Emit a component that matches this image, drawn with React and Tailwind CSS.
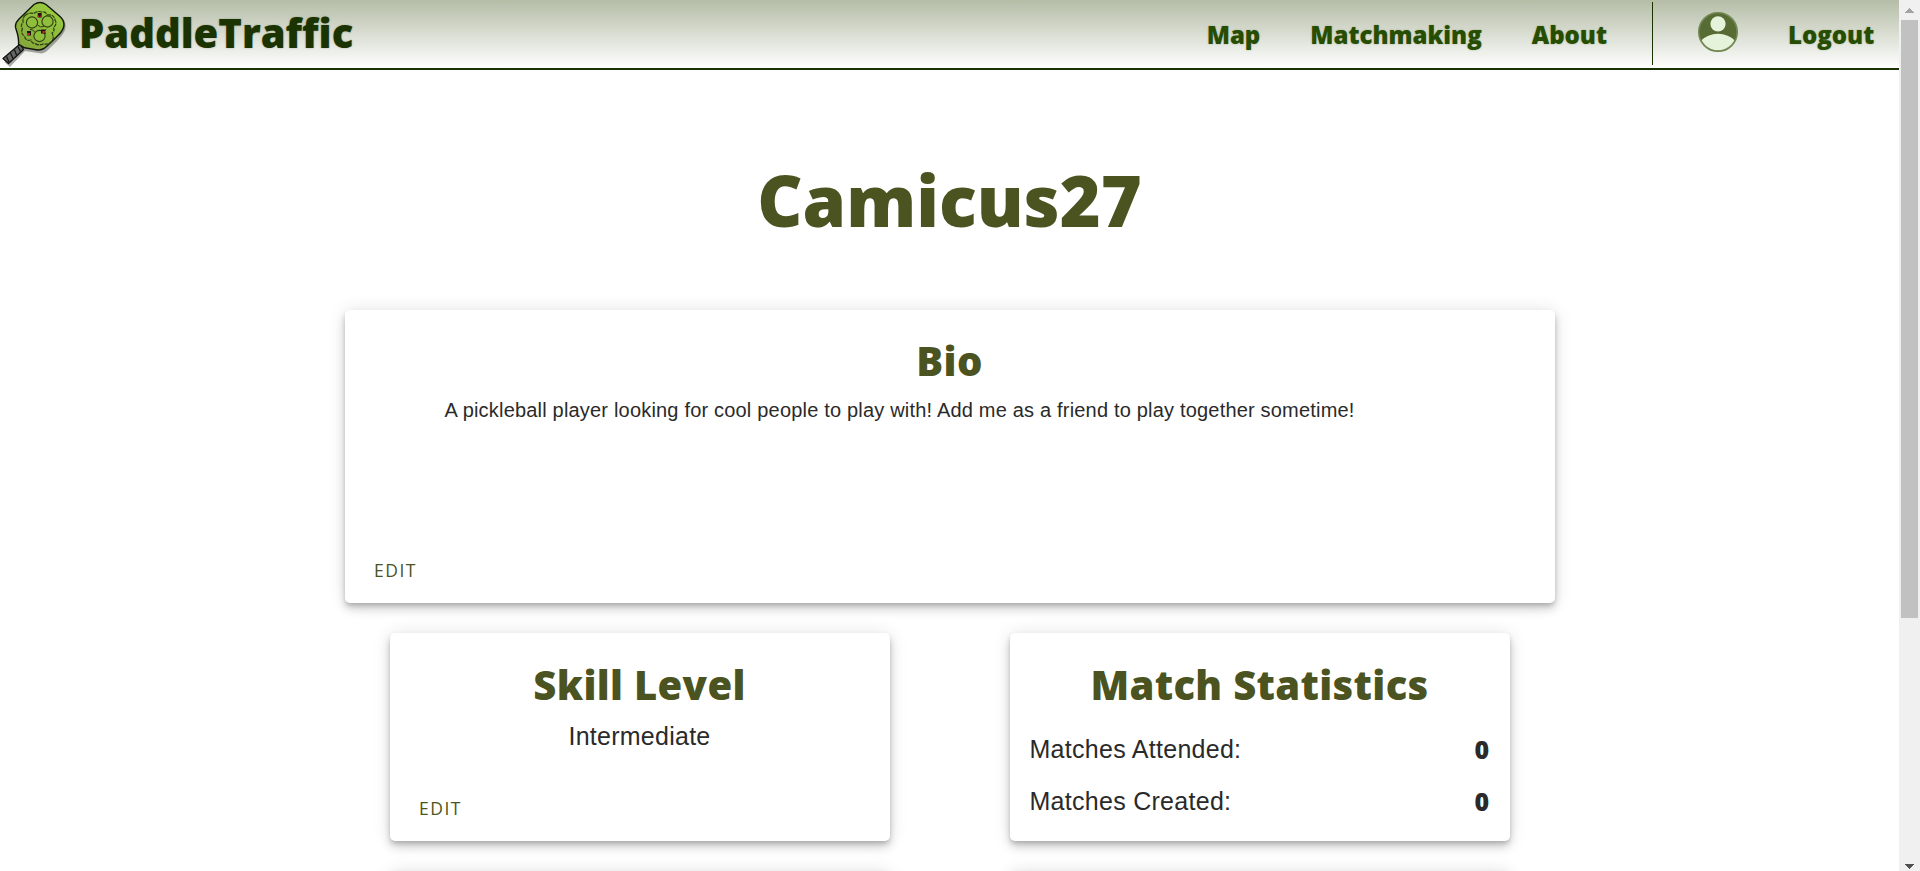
import React from "react";

const cardShadow =
  "shadow-[0px_3px_5px_-1px_rgba(0,0,0,0.2),0px_6px_10px_0px_rgba(0,0,0,0.14),0px_1px_18px_0px_rgba(0,0,0,0.12)]";

function PaddleLogo() {
  return (
    <svg className="block h-[68px] w-[68px]" viewBox="0 0 68 68">
      <defs>
        <linearGradient id="face" x1="0.8" y1="0.1" x2="0.2" y2="0.9">
          <stop offset="0" stopColor="#98cc3e" />
          <stop offset="1" stopColor="#86a83c" />
        </linearGradient>
      </defs>
      <path
        d="M37 6Q42 3 48 6L62 18Q67 23 65 30Q63.500 34 58 40L48 50Q44 54.500 38 53L25 51L10 67L4.500 62L20 47Z"
        fill="#000"
        opacity="0.32"
      />
      <path d="M20 44L3 58.500L8.500 63.500L23.500 49.500Z" fill="#666" stroke="#111" strokeWidth="1.300" strokeLinejoin="round" />
      <path d="M6.500 56.500L9 62M10.500 53L13 58.500M14.500 49.800L16.500 55M18 46.500L20.500 51.500" stroke="#111" strokeWidth="1.200" />
      <path
        d="M34 4.500Q40 .5 46 4.500L60 16.500Q65.500 21.500 63.300 28Q62 32 56 37.500L47 46Q42.500 50.800 36 49.800L24.500 47.800L18.500 44.200Q19 40 17.500 34L15.700 28Q14.500 23.500 19 19Z"
        fill="url(#face)"
        stroke="#12180a"
        strokeWidth="1.400"
        strokeLinejoin="round"
      />
      <path
        d="M25 15.500Q29 12 34 13.500Q37 10.500 42 12Q46 11.500 47 15Q54 14 55 20Q57.500 24 53.500 27.500Q55 31 52 33Q54.500 38 52 41.500Q48.500 45 43 44Q39 46 35 43.500Q31.500 43.500 31 40Q25.500 41.500 24.500 36Q20 33 22.500 29Q20 25 23 22.500Q22.500 17.500 25 15.500Z"
        fill="none"
        stroke="#2c3f12"
        strokeWidth="1.200"
        strokeDasharray="4 .8"
      />
      <g fill="#8fbe3d" stroke="#2c3f12" strokeWidth="1.100">
        <circle cx="32" cy="22.500" r="5.600" />
        <circle cx="47.500" cy="21.500" r="5.600" />
        <circle cx="39.500" cy="36" r="5.600" />
      </g>
      <path d="M37.500 25Q40 28 44 26.500M30 29.500Q33 29 34.500 32M46 29Q44 31 45.500 34" fill="none" stroke="#2c3f12" strokeWidth="1" />
      <path d="M37.700 13h4v4.500h-4zM27 31h4v4.500h-4zM41 29.500h4v4h-4z" fill="#1b1410" />
      <path
        d="M37.700 15.500h1.400v1.600h-1.400zM40.400 15.500h1.300v1.600h-1.300zM27 33h2.800v2h-2.800zM42.500 31h2.200v2h-2.200z"
        fill="#d0203a"
      />
    </svg>
  );
}

function Avatar() {
  return (
    <svg className="mt-[-4px] block h-10 w-10" viewBox="0 0 40 40">
      <defs>
        <clipPath id="avatar-clip">
          <circle cx="20" cy="20" r="18.300" />
        </clipPath>
      </defs>
      <circle cx="20" cy="20" r="19.200" fill="#566c34" stroke="#728752" strokeWidth="1.600" />
      <g clipPath="url(#avatar-clip)" fill="#e6f3db">
        <circle cx="20" cy="11.800" r="7.600" />
        <circle cx="20" cy="47" r="25.200" />
      </g>
    </svg>
  );
}

const navText =
  "pt-px text-[24px] leading-[67px] font-extrabold text-[#264d00] [text-shadow:0_0_2px_rgba(38,60,10,0.3)]";

function Header() {
  return (
    <header className="flex h-[70px] shrink-0 items-center border-b-2 border-[#1a3300] bg-linear-to-b from-[#b5bda7] to-white font-['Open_Sans',sans-serif]">
      <PaddleLogo />
      <div className="ml-[11px] pb-[2px] text-[40px] leading-[66px] font-extrabold text-[#1a3300] [text-shadow:0_0_2px_rgba(26,51,0,0.3)]">
        PaddleTraffic
      </div>
      <nav className="ml-auto flex items-center">
        <a className={`${navText} px-[25px]`}>Map</a>
        <a className={`${navText} px-[25px]`}>Matchmaking</a>
        <a className={`${navText} pl-[25px] pr-[45px]`}>About</a>
        <div className="mb-px h-[63px] w-px bg-[#1a3300]" />
        <div className="pl-[45px] pr-[25px]">
          <Avatar />
        </div>
        <a className={`${navText} w-[136px] pl-[25px]`}>Logout</a>
      </nav>
    </header>
  );
}

function Title({ children }) {
  return (
    <h2 className="text-center font-['Open_Sans',sans-serif] text-[40px] leading-[48px] font-extrabold tracking-[0.33px] text-[#4b5320]">
      {children}
    </h2>
  );
}

function Edit() {
  return (
    <button className="mt-auto -ml-[0.5px] self-start font-['Open_Sans',sans-serif] text-[17.500px] leading-6 tracking-[1.5px] text-[#4b5320]">
      EDIT
    </button>
  );
}

function Stat({ label, value }) {
  return (
    <div className="flex h-[52px] items-center justify-between">
      <span>{label}</span>
      <span className="font-['Open_Sans',sans-serif] font-extrabold">{value}</span>
    </div>
  );
}

function Scrollbar() {
  return (
    <div className="flex w-[21px] shrink-0 flex-col items-center bg-[#f0f0f0]">
      <svg className="block h-5 w-[21px]" viewBox="0 0 21 20" shapeRendering="crispEdges">
        <path d="M6 13L10.500 8L15 13Z" fill="#a3a3a3" />
      </svg>
      <div className="h-[598px] w-[17px] bg-[#c1c1c1]" />
      <svg className="mt-auto block h-5 w-[21px]" viewBox="0 0 21 20" shapeRendering="crispEdges">
        <path d="M6 13L15 13L10.500 18Z" fill="#505050" />
      </svg>
    </div>
  );
}

export default function App() {
  return (
    <div className="flex h-[871px] w-[1920px] overflow-hidden bg-white font-['Liberation_Sans',Arial,sans-serif] text-[#2a2a2a]">
      <div className="flex min-w-0 flex-1 flex-col overflow-hidden">
        <Header />
        <h1 className="pt-[82px] text-center font-['Open_Sans',sans-serif] text-[70px] leading-[96px] font-extrabold text-[#4b5320]">
          Camicus27
        </h1>
        <main className="mx-auto mt-[62px] w-[1210px]">
          <section className={`${cardShadow} flex h-[293px] flex-col rounded-[5px] bg-white px-[30px] pt-[27px] pb-[21px]`}>
            <Title>Bio</Title>
            <p className="mt-[12px] pl-[70px] text-[20px] leading-[26px] tracking-[0.19px]">
              A pickleball player looking for cool people to play with! Add me as a friend to play together sometime!
            </p>
            <Edit />
          </section>
          <div className="mt-[30px] grid grid-cols-[500px_500px] justify-center gap-x-[120px] gap-y-[30px]">
            <section className={`${cardShadow} flex h-[208px] flex-col rounded-[5px] bg-white px-[30px] pt-[28px] pb-[21px]`}>
              <Title>Skill Level</Title>
              <p className="mt-[11px] text-center text-[25px] leading-[32px] tracking-[0.25px]">Intermediate</p>
              <Edit />
            </section>
            <section className={`${cardShadow} h-[208px] rounded-[5px] bg-white px-[20px] pt-[28px]`}>
              <Title>Match Statistics</Title>
              <div className="mt-[15px] text-[25px] tracking-[0.28px]">
                <Stat label="Matches Attended:" value="0" />
                <Stat label="Matches Created:" value="0" />
              </div>
            </section>
            <section className={`${cardShadow} h-[208px] rounded-[5px] bg-white`} />
            <section className={`${cardShadow} h-[208px] rounded-[5px] bg-white`} />
          </div>
        </main>
      </div>
      <Scrollbar />
    </div>
  );
}
